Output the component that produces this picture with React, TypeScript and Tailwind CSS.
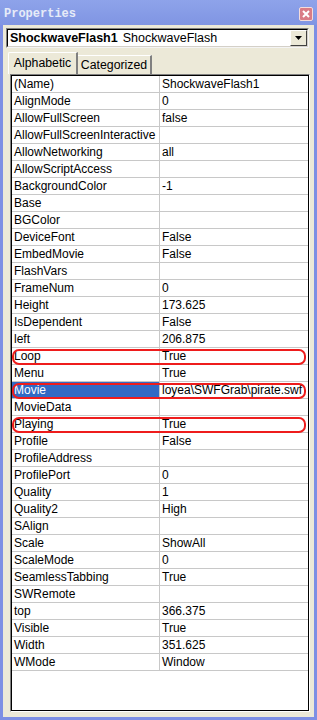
import React from "react";

const rows: [string, string, boolean?][] = [
  ["(Name)", "ShockwaveFlash1"],
  ["AlignMode", "0"],
  ["AllowFullScreen", "false"],
  ["AllowFullScreenInteractive", ""],
  ["AllowNetworking", "all"],
  ["AllowScriptAccess", ""],
  ["BackgroundColor", "-1"],
  ["Base", ""],
  ["BGColor", ""],
  ["DeviceFont", "False"],
  ["EmbedMovie", "False"],
  ["FlashVars", ""],
  ["FrameNum", "0"],
  ["Height", "173.625"],
  ["IsDependent", "False"],
  ["left", "206.875"],
  ["Loop", "True", true],
  ["Menu", "True"],
  ["Movie", "loyea\\SWFGrab\\pirate.swf", true],
  ["MovieData", ""],
  ["Playing", "True", true],
  ["Profile", "False"],
  ["ProfileAddress", ""],
  ["ProfilePort", "0"],
  ["Quality", "1"],
  ["Quality2", "High"],
  ["SAlign", ""],
  ["Scale", "ShowAll"],
  ["ScaleMode", "0"],
  ["SeamlessTabbing", "True"],
  ["SWRemote", ""],
  ["top", "366.375"],
  ["Visible", "True"],
  ["Width", "351.625"],
  ["WMode", "Window"],
];

export default function App() {
  const font = { fontFamily: '"Liberation Sans", Arial, sans-serif' };
  return (
    <div
      className="w-[317px] h-[720px] flex flex-col bg-[#7d8fe4] overflow-hidden"
      style={font}
    >
      {/* Title bar */}
      <div className="h-[25px] shrink-0 flex items-center justify-between pl-[4px] pr-[4px] bg-gradient-to-b from-[#8ea3ea] to-[#8095e3]">
        <span
          className="text-[12px] font-bold text-[#e6ebf8] mt-[2px]"
          style={{ fontFamily: '"Liberation Mono", "DejaVu Sans Mono", monospace' }}
        >
          Properties
        </span>
        <div className="w-[14px] h-[14px] mt-[3px] rounded-[2px] border border-[#f4dcdc] bg-[#d97c86] flex items-center justify-center">
          <svg width="10" height="10" viewBox="0 0 10 10">
            <path d="M2 2 L8 8 M8 2 L2 8" stroke="#ffffff" strokeWidth="2" />
          </svg>
        </div>
      </div>

      {/* Body */}
      <div className="flex-1 mx-[3px] mb-[3px] bg-[#ece9d8] flex flex-col px-[3px] pt-[3px] pb-[5px]">
        {/* Combo box */}
        <div className="h-[20px] shrink-0 mr-[2px] bg-white border border-t-[#7f7f7f] border-l-[#7f7f7f] border-b-[#f4f4f4] border-r-[#f4f4f4] flex items-center">
          <div className="flex-1 flex items-center h-full border border-t-black border-l-black border-b-[#d4d0c8] border-r-[#d4d0c8] pl-[2px] text-[12.5px] text-black whitespace-nowrap overflow-hidden">
            <span className="font-bold">ShockwaveFlash1</span>
            <span className="ml-[5px]">ShockwaveFlash</span>
            <div className="ml-auto h-full w-[17px] shrink-0 bg-[#ece9d8] border border-t-white border-l-white border-b-[#404040] border-r-[#404040] flex items-center justify-center">
              <svg width="7" height="4" viewBox="0 0 7 4">
                <path d="M0 0 H7 L3.5 4 Z" fill="#000" />
              </svg>
            </div>
          </div>
        </div>

        {/* Tabs */}
        <div className="flex items-end h-[24px] shrink-0 mt-[2px] pl-[2px] relative z-10">
          <div className="h-[22px] w-[70px] bg-[#ece9d8] border-t border-l border-white border-r-2 border-r-[#808080] rounded-tl-[2px] flex items-center justify-center text-[12.3px] text-black pb-[1px]">
            Alphabetic
          </div>
          <div className="h-[19px] w-[74px] bg-[#ece9d8] border-t border-white border-r-2 border-r-[#808080] flex items-center justify-center text-[12.3px] text-black">
            Categorized
          </div>
        </div>

        {/* Grid frame */}
        <div className="flex-1 ml-[4px] mr-[1px] border-t border-l border-[#808080] border-b border-r border-b-white border-r-white flex">
          <div className="flex-1 border border-black bg-white flex flex-col">
            {rows.map(([name, value, circled]) => {
              const selected = name === "Movie";
              return (
                <div
                  key={name}
                  className="relative flex h-[17px] shrink-0 border-b border-[#c8c8c8] text-[12px] leading-[16px] text-black"
                >
                  <div
                    className={
                      "w-[148px] shrink-0 pl-[2px] border-r border-[#c8c8c8] whitespace-nowrap overflow-hidden " +
                      (selected ? "bg-[#316ac5] text-white" : "")
                    }
                  >
                    {name}
                  </div>
                  <div className="flex-1 pl-[2px] whitespace-nowrap overflow-hidden">
                    {value}
                  </div>
                  {circled && (
                    <div className="absolute left-[0px] right-[2px] top-[1px] bottom-[-1px] border-2 border-[#ee1c1c] rounded-[7px]" />
                  )}
                </div>
              );
            })}
          </div>
        </div>
      </div>
    </div>
  );
}
